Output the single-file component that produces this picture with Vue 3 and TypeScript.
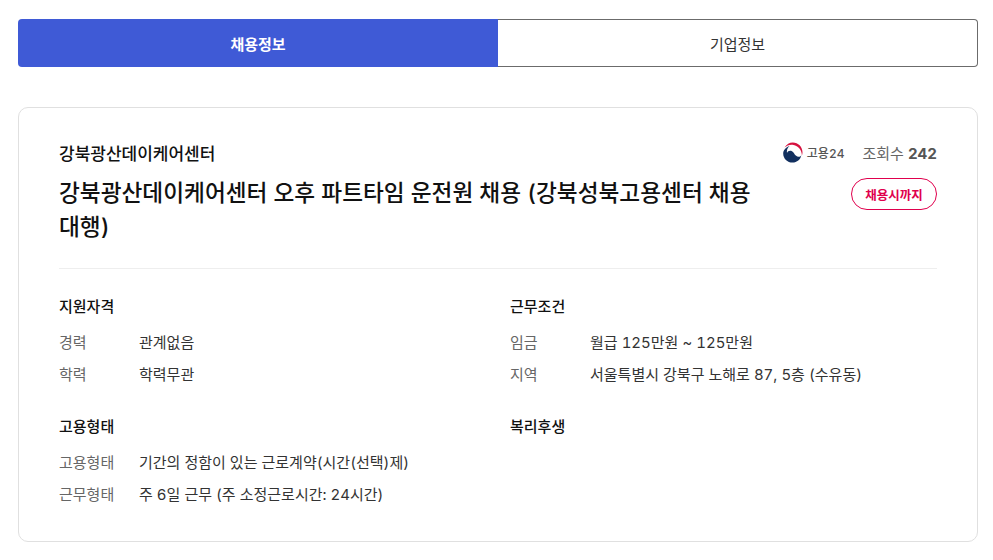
<template>
  <div class="pagina">
    <div class="tabs">
      <button
        v-for="(tab, i) in tabs"
        :key="tab"
        :class="['tab', { activo: i === 0 }]"
      >{{ tab }}</button>
    </div>

    <section class="tarjeta">
      <header class="cabecera">
        <div class="titulos">
          <p class="empresa">강북광산데이케어센터</p>
          <h1 class="titulo">강북광산데이케어센터 오후 파트타임 운전원 채용 (강북성북고용센터 채용 대행)</h1>
        </div>
        <div class="lateral">
          <div class="meta">
            <span class="logo">
              <svg width="21" height="21" viewBox="0 0 21 21">
                <path d="M7.500 4C4 5.200 1.200 8 1.200 11.500c0 5.200 4.200 9.100 9.300 9.100 4.500 0 8.100-3 8.800-7.300-1.300 1.900-3.500 2-5.500.3-1.300-1.100-1.800-3.400-3.800-4.400-2-1-4.200-.4-5 1.800-.5-2.500.3-5 2.500-7z" fill="#12305f" />
                <path d="M2.500 5.500C4.500 2.400 7.500.5 10.800.5c5.400 0 9.700 4.400 9.700 9.800 0 1.200-.2 2.200-.6 3.200 0-5.500-3.900-10.300-9.400-10.800-3-.3-5.700.8-8 2.800z" fill="#d6123f" />
              </svg>
              <span class="logo-texto">고용24</span>
            </span>
            <span class="vistas">조회수 <b>242</b></span>
          </div>
          <span class="insignia">채용시까지</span>
        </div>
      </header>

      <div class="rejilla">
        <div v-for="grupo in grupos" :key="grupo.titulo" class="grupo">
          <h2 class="grupo-titulo">{{ grupo.titulo }}</h2>
          <dl v-if="grupo.filas.length" class="filas">
            <div v-for="fila in grupo.filas" :key="fila[0]" class="fila">
              <dt>{{ fila[0] }}</dt>
              <dd>{{ fila[1] }}</dd>
            </div>
          </dl>
        </div>
      </div>
    </section>
  </div>
</template>

<script setup lang="ts">
interface Grupo {
  titulo: string
  filas: [string, string][]
}

const tabs = ['채용정보', '기업정보']

const grupos: Grupo[] = [
  { titulo: '지원자격', filas: [['경력', '관계없음'], ['학력', '학력무관']] },
  { titulo: '근무조건', filas: [['임금', '월급 125만원 ~ 125만원'], ['지역', '서울특별시 강북구 노해로 87, 5층 (수유동)']] },
  { titulo: '고용형태', filas: [['고용형태', '기간의 정함이 있는 근로계약(시간(선택)제)'], ['근무형태', '주 6일 근무 (주 소정근로시간: 24시간)']] },
  { titulo: '복리후생', filas: [] },
]
</script>

<style>
html,
body {
  background: #fff;
}
</style>

<style scoped>
.pagina {
  width: 993px;
  height: 560px;
  box-sizing: border-box;
  padding: 19px 15px 0 18px;
  overflow: hidden;
  font-family: Inter, "Noto Sans CJK KR", sans-serif;
  font-variant-numeric: tabular-nums;
  color: #111;
}

.tabs {
  display: grid;
  grid-template-columns: 480px 1fr;
  height: 48px;
  margin-bottom: 40px;
}

.tab {
  font: inherit;
  font-size: 15px;
  color: #333;
  background: #fff;
  border: 1px solid #6b6b6b;
  border-left: none;
  border-radius: 0 4px 4px 0;
  padding: 0;
}

.tab.activo {
  color: #fff;
  font-weight: 700;
  background: #3f5ad6;
  border: none;
  border-radius: 4px 0 0 4px;
}

.tarjeta {
  box-sizing: border-box;
  height: 435px;
  padding: 34px 40px 0;
  border: 1px solid #e0e0e0;
  border-radius: 10px;
}

.cabecera {
  display: flex;
  justify-content: space-between;
  padding-bottom: 24px;
  border-bottom: 1px solid #eee;
}

.titulos {
  width: 710px;
}

.empresa {
  margin: 0 0 10px;
  font-size: 17px;
  line-height: 24px;
  font-weight: 500;
}

.titulo {
  margin: 0;
  font-size: 22.66px;
  line-height: 34px;
  font-weight: 500;
  word-break: keep-all;
}

.lateral {
  display: flex;
  flex-direction: column;
  align-items: flex-end;
  gap: 14px;
  margin-top: -2px;
}

.meta {
  display: flex;
  align-items: center;
  height: 24px;
  gap: 18px;
}

.logo {
  display: flex;
  align-items: center;
  gap: 4px;
}

.logo-texto {
  font-size: 12px;
  font-weight: 500;
  color: #555;
}

.vistas {
  font-size: 15px;
  color: #666;
}

.vistas b {
  font-weight: 700;
  color: #555;
}

.insignia {
  box-sizing: border-box;
  display: flex;
  align-items: center;
  justify-content: center;
  width: 86px;
  height: 32px;
  font-size: 12.5px;
  font-weight: 700;
  color: #e0004d;
  border: 1px solid #e0004d;
  border-radius: 16px;
}

.rejilla {
  display: grid;
  grid-template-columns: 451px 1fr;
  row-gap: 26px;
  padding-top: 24px;
}

.grupo-titulo {
  margin: 0 0 10px;
  font-size: 15px;
  line-height: 28px;
  font-weight: 500;
}

.filas {
  margin: 0;
  display: grid;
  gap: 8px;
}

.fila {
  display: flex;
  line-height: 24px;
  font-size: 15px;
}

.fila dt {
  width: 80px;
  color: #666;
}

.fila dd {
  margin: 0;
  color: #333;
}
</style>
